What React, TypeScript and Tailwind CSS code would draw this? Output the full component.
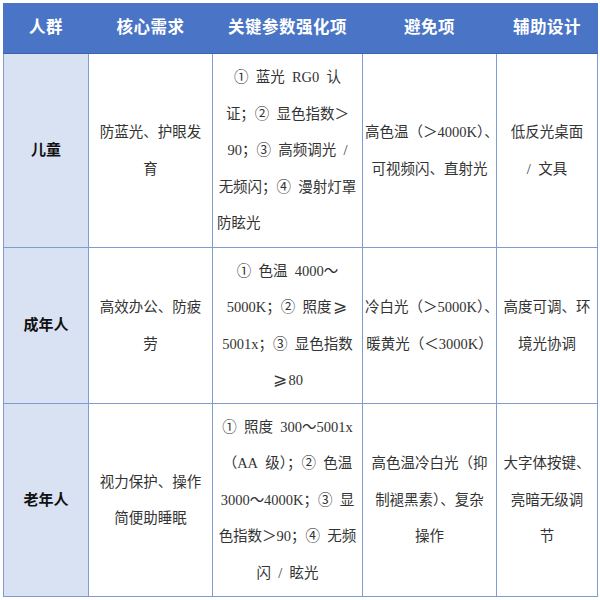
import React from 'react';

interface Row {
  group: string;
  need: string[];
  params: string[];
  avoid: string[];
  assist: string[];
  height: string;
}

const headers = ['人群', '核心需求', '关键参数强化项', '避免项', '辅助设计'];

const rows: Row[] = [
  {
    group: '儿童',
    need: ['防蓝光、护眼发', '育'],
    params: ['① 蓝光 RG0 认', '证；② 显色指数＞', '90；③ 高频调光 /', '无频闪；④ 漫射灯罩', '防眩光'],
    avoid: ['高色温（＞4000K）、', '可视频闪、直射光'],
    assist: ['低反光桌面', '/ 文具'],
    height: 'h-[194px]',
  },
  {
    group: '成年人',
    need: ['高效办公、防疲', '劳'],
    params: ['① 色温 4000～', '5000K；② 照度≥', '5001x；③ 显色指数', '≥80'],
    avoid: ['冷白光（＞5000K）、', '暖黄光（＜3000K）'],
    assist: ['高度可调、环', '境光协调'],
    height: 'h-[156px]',
  },
  {
    group: '老年人',
    need: ['视力保护、操作', '简便助睡眠'],
    params: ['① 照度 300～5001x', '（AA 级）；② 色温', '3000～4000K；③ 显', '色指数＞90；④ 无频', '闪 / 眩光'],
    avoid: ['高色温冷白光（抑', '制褪黑素）、复杂', '操作'],
    assist: ['大字体按键、', '亮暗无级调', '节'],
    height: 'h-[193px]',
  },
];

const font = { fontFamily: '"Liberation Serif", "Noto Sans CJK SC", serif' };

// SimSun-like half-width spaces and full-width ≥
const renderText = (s: string) =>
  s
    .replace(/ /g, '\u2002')
    .split('≥')
    .flatMap((part, i) =>
      i === 0
        ? [part]
        : [
            <span key={i} className="inline-block w-[1em] text-center font-['Noto_Sans_CJK_SC'] text-[1.15em] leading-none">
              ⩾
            </span>,
            part,
          ]
    );

const Lines = ({ lines, left }: { lines: string[]; left?: boolean }) => (
  <div className="leading-[36.5px]">
    {lines.map((l, i) => (
      <div key={i} className={`whitespace-nowrap ${left && i === lines.length - 1 ? 'text-left' : 'text-center'}`}>
        {renderText(l)}
      </div>
    ))}
  </div>
);

export default function App() {
  return (
    <div className="w-[600px] h-[600px] bg-white p-[3px]" style={font}>
      <table className="table-fixed border-collapse w-[594px] text-[14.5px] text-[#333333]">
        <colgroup>
          <col className="w-[85px]" />
          <col className="w-[124px]" />
          <col className="w-[150px]" />
          <col className="w-[134px]" />
          <col className="w-[101px]" />
        </colgroup>
        <thead>
          <tr className="h-[50px] bg-[#4a75c6]">
            {headers.map((h) => (
              <th
                key={h}
                className="border border-[#4a75c6] border-b-[#3e63ad] text-white font-bold text-[16.5px] text-center tracking-[0.5px]"
              >
                {h}
              </th>
            ))}
          </tr>
        </thead>
        <tbody>
          {rows.map((r, ri) => (
            <tr key={r.group} className={r.height}>
              <td className="border border-[#7f9bd2] bg-[#d9e2f3] text-center font-bold text-[#111111] text-[15px]">
                {r.group}
              </td>
              <td className="border border-[#7f9bd2] px-1 align-middle">
                <Lines lines={r.need} />
              </td>
              <td className="border border-[#7f9bd2] px-[4px] align-middle">
                <Lines lines={r.params} left={ri === 0} />
              </td>
              <td className="border border-[#7f9bd2] px-[2px] align-middle">
                <Lines lines={r.avoid} />
              </td>
              <td className="border border-[#7f9bd2] px-[2px] align-middle">
                <Lines lines={r.assist} />
              </td>
            </tr>
          ))}
        </tbody>
      </table>
    </div>
  );
}
